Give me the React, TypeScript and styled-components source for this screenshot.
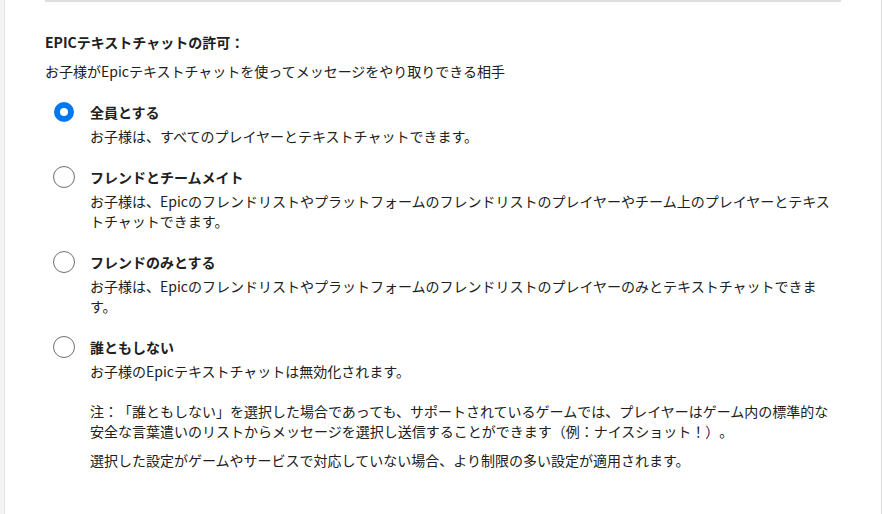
import styled, { createGlobalStyle } from 'styled-components';

const GlobalStyle = createGlobalStyle`
  html, body {
    margin: 0;
    padding: 0;
    background: #f4f4f4;
  }
  body {
    font-family: "Noto Sans CJK JP", "Noto Sans", sans-serif;
    color: #202020;
    text-spacing-trim: space-all;
  }
`;

interface ChatOption {
  id: string;
  label: string;
  description: string;
  notes?: string[];
}

const OPTIONS: ChatOption[] = [
  {
    id: 'everyone',
    label: '全員とする',
    description: 'お子様は、すべてのプレイヤーとテキストチャットできます。',
  },
  {
    id: 'friends-team',
    label: 'フレンドとチームメイト',
    description:
      'お子様は、Epicのフレンドリストやプラットフォームのフレンドリストのプレイヤーやチーム上のプレイヤーとテキストチャットできます。',
  },
  {
    id: 'friends',
    label: 'フレンドのみとする',
    description:
      'お子様は、Epicのフレンドリストやプラットフォームのフレンドリストのプレイヤーのみとテキストチャットできます。',
  },
  {
    id: 'nobody',
    label: '誰ともしない',
    description: 'お子様のEpicテキストチャットは無効化されます。',
    notes: [
      '注：「誰ともしない」を選択した場合であっても、サポートされているゲームでは、プレイヤーはゲーム内の標準的な安全な言葉遣いのリストからメッセージを選択し送信することができます（例：ナイスショット！）。',
      '選択した設定がゲームやサービスで対応していない場合、より制限の多い設定が適用されます。',
    ],
  },
];

const S = {
  Page: styled.div`
    min-height: 514px;
    margin-left: 4px;
    background: #fff;
    border-left: 1px solid #e6e6e6;
    border-right: 1px solid #dcdcdc;
    box-sizing: border-box;
    padding: 0 40px 0 40px;
  `,
  Section: styled.section`
    border-top: 2px solid #dedede;
    padding-top: 30px;
    font-size: 14px;
    line-height: 20px;
  `,
  Title: styled.h3`
    margin: 0;
    font-size: 14px;
    line-height: 20px;
    font-weight: 700;
  `,
  Subtitle: styled.p`
    margin: 9px 0 0;
  `,
  List: styled.div`
    display: flex;
    flex-direction: column;
    gap: 21px;
    margin-top: 21px;
  `,
  Option: styled.label`
    display: grid;
    grid-template-columns: 45px 1fr;
    cursor: pointer;
  `,
  Radio: styled.span<{ checked: boolean }>`
    box-sizing: border-box;
    margin: ${({ checked }) => (checked ? '0 0 0 9px' : '-1px 0 0 8px')};
    width: ${({ checked }) => (checked ? '20px' : '22px')};
    height: ${({ checked }) => (checked ? '20px' : '22px')};
    border-radius: 50%;
    border: ${({ checked }) => (checked ? '6px solid #0078f2' : '1.5px solid #6e6e6e')};
    background: #fff;
  `,
  Body: styled.div`
    display: flex;
    flex-direction: column;
  `,
  Label: styled.span`
    font-weight: 700;
  `,
  Description: styled.p`
    margin: 4px 0 0;
  `,
  Note: styled.p<{ spacing: number }>`
    margin: ${({ spacing }) => spacing}px 0 0;
  `,
};

export default function App() {
  const selected = 'everyone';

  return (
    <>
      <GlobalStyle />
      <S.Page>
        <S.Section>
          <S.Title>EPICテキストチャットの許可：</S.Title>
          <S.Subtitle>お子様がEpicテキストチャットを使ってメッセージをやり取りできる相手</S.Subtitle>
          <S.List role="radiogroup">
            {OPTIONS.map((option) => (
              <S.Option key={option.id}>
                <S.Radio checked={option.id === selected} role="radio" aria-checked={option.id === selected} />
                <S.Body>
                  <S.Label>{option.label}</S.Label>
                  <S.Description>{option.description}</S.Description>
                  {option.notes?.map((note, i) => (
                    <S.Note key={i} spacing={i === 0 ? 20 : 9}>
                      {note}
                    </S.Note>
                  ))}
                </S.Body>
              </S.Option>
            ))}
          </S.List>
        </S.Section>
      </S.Page>
    </>
  );
}
